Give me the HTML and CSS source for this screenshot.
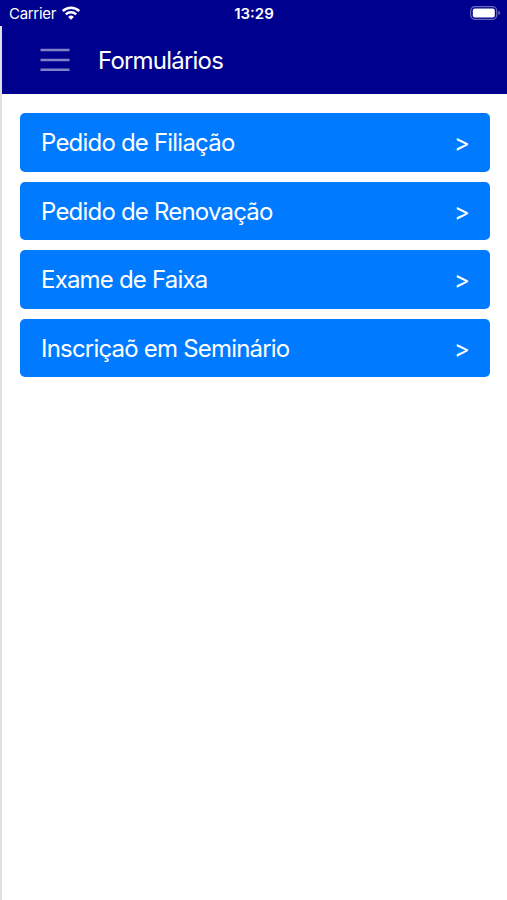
FILE: index.html
```html
<!DOCTYPE html>
<html lang="pt-BR">
  <head>
    <meta charset="UTF-8">
    <meta name="viewport" content="width=device-width, initial-scale=1.0">
    <title>Formulários</title>
    <link rel="stylesheet" href="styles.css">
  </head>
  <body>
  <div class="status-bar">
    <div class="carrier">
      <span>Carrier</span>
      <svg width="18" height="14" viewBox="0 0 18 14">
        <path d="M0.8 5a11.8 11.8 0 0 1 16.4 0M3.8 8.3a7.5 7.5 0 0 1 10.4 0" fill="none" stroke="#fff" stroke-width="2.5"/>
        <path d="M9 13.8L6.1 10.9a4.1 4.1 0 0 1 5.8 0z" fill="#fff"/>
      </svg>
    </div>
    <div class="clock">13:29</div>
    <div class="battery">
      <svg width="31" height="14" viewBox="0 0 31 14">
        <rect x="0.7" y="0.7" width="26" height="12.6" rx="4" fill="none" stroke="#6a6abc" stroke-width="1.2"/>
        <rect x="2.8" y="2.6" width="22" height="8.8" rx="2" fill="#fff"/>
        <path d="M28.4 4.8c2.4 .8 2.4 3.6 0 4.4z" fill="#6a6abc"/>
      </svg>
    </div>
  </div>
  <div class="page">
    <header class="navbar">
      <button class="menu-btn" aria-label="Menu">
        <svg width="30" height="24" viewBox="0 0 30 24">
          <path d="M0.5 2h29M0.5 11.9h29M0.5 21.8h29" stroke="#8080c6" stroke-width="2.5"/>
        </svg>
      </button>
      <h1>Formulários</h1>
    </header>
    <main class="forms">
      <a class="form-link" href="#"><span>Pedido de Filiação</span><span>&gt;</span></a>
      <a class="form-link" href="#"><span>Pedido de Renovação</span><span>&gt;</span></a>
      <a class="form-link" href="#"><span>Exame de Faixa</span><span>&gt;</span></a>
      <a class="form-link" href="#"><span>Inscriçaõ em Seminário</span><span>&gt;</span></a>
    </main>
  </div>
  </body>
</html>
```
FILE: styles.css
```css
html, body {
  height: 100%;
  margin: 0;
}
body {
  display: flex;
  flex-direction: column;
  font-family: Inter, "Liberation Sans", sans-serif;
  background-color: #fff;
}
.status-bar {
  display: grid;
  grid-template-columns: 1fr auto 1fr;
  align-items: center;
  flex: none;
  height: 26px;
  padding: 0 6px 0 7px;
  color: #fff;
  background-color: #00008e;
}
.carrier {
  display: flex;
  align-items: center;
  gap: 6px;
  padding-left: 2px;
  font-size: 15px;
  letter-spacing: -0.3px;
}
.clock {
  font-size: 15px;
  font-weight: 600;
}
.battery {
  display: flex;
  justify-content: flex-end;
}
.page {
  flex: 1;
  border-left: 2px solid #e0e0e2;
}
.navbar {
  display: flex;
  align-items: center;
  height: 67.5px;
  padding-left: 38px;
  color: #fff;
  background-color: #00008e;
}
.menu-btn {
  display: flex;
  margin: 0 28px 0 0;
  padding: 0;
  border: 0;
  background: none;
}
.navbar h1 {
  margin: 0;
  padding-top: 1px;
  font-size: 24px;
  font-weight: 400;
  letter-spacing: -0.8px;
}
.forms {
  display: flex;
  flex-direction: column;
  gap: 10px;
  padding: 19.5px 17px 0 18px;
}
.form-link {
  display: flex;
  align-items: center;
  justify-content: space-between;
  box-sizing: border-box;
  height: 58.5px;
  padding: 1px 21px 0;
  border-radius: 5px;
  color: #fff;
  background-color: #007bff;
  font-size: 24px;
  letter-spacing: -0.8px;
  text-decoration: none;
}
```
